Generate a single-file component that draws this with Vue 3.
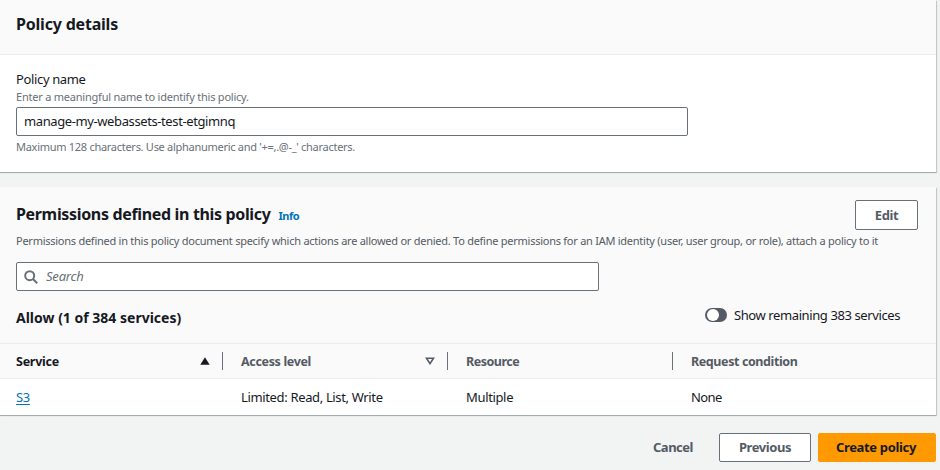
<script setup>
import { ref } from 'vue'

const policyName = ref('manage-my-webassets-test-etgimnq')
const search = ref('')
const showRemaining = ref(false)
const rows = [
  { service: 'S3', access: 'Limited: Read, List, Write', resource: 'Multiple', condition: 'None' },
]
</script>

<template>
  <main class="page">
    <section class="panel">
      <header class="panel-header">
        <h2 class="title details-title">Policy details</h2>
      </header>
      <div class="details">
        <label class="label" for="policy-name">Policy name</label>
        <p class="hint">Enter a meaningful name to identify this policy.</p>
        <input id="policy-name" v-model="policyName" class="input name-input" type="text" spellcheck="false" />
        <p class="hint constraint">Maximum 128 characters. Use alphanumeric and '+=,.@-_' characters.</p>
      </div>
    </section>

    <section class="panel permissions">
      <div class="perm-head">
        <div class="perm-top">
          <div class="heading">
            <h2 class="title perm-title">Permissions defined in this policy</h2>
            <a class="info">Info</a>
          </div>
          <button class="btn edit">Edit</button>
        </div>
        <p class="desc">Permissions defined in this policy document specify which actions are allowed or denied. To define permissions for an IAM identity (user, user group, or role), attach a policy to it</p>
        <div class="search">
          <svg class="search-icon" viewBox="0 0 14 14" width="14" height="14">
            <circle cx="5.7" cy="5.7" r="4.5" />
            <path d="M9 9l4.2 4.2" />
          </svg>
          <input v-model="search" class="search-field" type="text" placeholder="Search" />
        </div>
        <div class="allow-row">
          <h3 class="allow">Allow (1 of 384 services)</h3>
          <label class="toggle">
            <input v-model="showRemaining" type="checkbox" class="check" />
            <span class="track"><span class="knob"></span></span>
            <span class="toggle-label">Show remaining 383 services</span>
          </label>
        </div>
      </div>

      <div class="row head">
        <div class="cell sorted">
          <span class="th-service">Service</span>
          <svg viewBox="0 0 10 8" width="10" height="8"><path class="solid" d="M5 .3L9.7 7.7H.3z" /></svg>
        </div>
        <div class="cell">
          <span class="th-access">Access level</span>
          <svg viewBox="0 0 10 8" width="10" height="8"><path class="outline" d="M1.5 1.2h7L5 6.6z" /></svg>
        </div>
        <div class="cell"><span class="th-resource">Resource</span></div>
        <div class="cell"><span class="th-condition">Request condition</span></div>
      </div>
      <div v-for="r in rows" :key="r.service" class="row body">
        <div class="cell"><a class="link">{{ r.service }}</a></div>
        <div class="cell">{{ r.access }}</div>
        <div class="cell">{{ r.resource }}</div>
        <div class="cell condition">{{ r.condition }}</div>
      </div>
    </section>

    <footer class="actions">
      <button class="btn cancel">Cancel</button>
      <button class="btn previous">Previous</button>
      <button class="btn primary">Create policy</button>
    </footer>
  </main>
</template>

<style>
body {
  background: #f2f3f3;
}
</style>

<style scoped>
.page {
  box-sizing: border-box;
  height: 470px;
  padding-right: 4px;
  overflow: hidden;
  background: #f2f3f3;
  color: #16191f;
  font: 13px/18px "Noto Sans", sans-serif;
  letter-spacing: -0.35px;
}
.page * {
  box-sizing: border-box;
}
h2, h3, p {
  margin: 0;
}
input, button {
  font: inherit;
  letter-spacing: inherit;
  color: inherit;
}
.panel {
  height: 172px;
  background: #fff;
  box-shadow: 0 1px 0 #a3adb0, 1px 1px 1px rgba(0, 28, 36, 0.2);
}
.panel-header {
  height: 55px;
  padding: 14px 16px;
  background: #fafafa;
  border-bottom: 1px solid #eaeded;
}
.title {
  font-size: 16px;
  line-height: 20px;
  font-weight: 700;
}
.details-title {
  letter-spacing: -0.2px;
}
.details {
  padding: 15px 16px 0;
}
.label {
  display: block;
  letter-spacing: -0.36px;
}
.hint {
  margin-top: 1px;
  font-size: 11px;
  line-height: 16px;
  letter-spacing: -0.22px;
  color: #687078;
}
.constraint {
  margin-top: 3px;
  letter-spacing: -0.28px;
}
.input {
  display: block;
  height: 29px;
  border: 1px solid #687078;
  border-radius: 2px;
  background: #fff;
  outline: none;
}
.name-input {
  width: 672px;
  margin-top: 2px;
  padding: 0 7px 1px;
  letter-spacing: -0.396px;
}
.permissions {
  height: 228px;
  margin-top: 15px;
}
.perm-head {
  height: 156px;
  padding: 13px 16px 0;
  background: #fafafa;
}
.perm-top {
  display: flex;
  justify-content: space-between;
  height: 33px;
  padding-right: 2px;
}
.heading {
  display: flex;
  align-items: baseline;
  gap: 8px;
  padding-top: 4px;
}
.perm-title {
  letter-spacing: -0.339px;
}
.info {
  font-size: 11px;
  line-height: 16px;
  font-weight: 700;
  letter-spacing: -0.5px;
  color: #0073bb;
}
.desc {
  font-size: 11px;
  line-height: 16px;
  letter-spacing: -0.256px;
  color: #545b64;
  white-space: nowrap;
}
.search {
  display: flex;
  align-items: center;
  gap: 8px;
  width: 583px;
  height: 29px;
  margin-top: 13px;
  padding: 0 7px;
  border: 1px solid #687078;
  border-radius: 2px;
  background: #fff;
}
.search-icon {
  fill: none;
  stroke: #687078;
  stroke-width: 2;
}
.search-field {
  flex: 1;
  padding: 0 0 2px;
  border: 0;
  outline: none;
  background: none;
  letter-spacing: -0.2px;
}
.search-field::placeholder {
  color: #687078;
  font-style: italic;
  opacity: 1;
}
.allow-row {
  display: flex;
  justify-content: space-between;
  padding: 15px 20px 0 0;
}
.allow {
  margin-top: 2px;
  font-size: 14px;
  line-height: 20px;
  letter-spacing: 0;
}
.toggle {
  display: flex;
  align-items: center;
  height: 18px;
  letter-spacing: -0.4px;
}
.check {
  display: none;
}
.track {
  display: flex;
  width: 22px;
  height: 14px;
  margin-right: 7px;
  padding: 1px 2px;
  border-radius: 7px;
  background: #545b64;
}
.knob {
  width: 12px;
  height: 12px;
  border-radius: 50%;
  background: #fff;
}
.check:checked + .track {
  justify-content: flex-end;
}
.row {
  display: grid;
  grid-template-columns: 223px 225px 225px 263px;
  align-items: center;
}
.head {
  height: 36px;
  border: solid #eaeded;
  border-width: 1px 0;
  background: #fafafa;
  color: #545b64;
  font-size: 12.5px;
  font-weight: 700;
}
.head span {
  padding-top: 1px;
}
.body {
  height: 36px;
}
.cell {
  padding: 0 18px;
}
.cell:first-child {
  padding-left: 16px;
}
.head .cell {
  display: flex;
  align-items: center;
  justify-content: space-between;
  height: 18px;
  padding-right: 12px;
  border-right: 1px solid #687078;
}
.head .cell:last-child {
  border-right: 0;
}
.head .sorted {
  color: #16191f;
}
.solid {
  fill: #16191f;
}
.outline {
  fill: none;
  stroke: #545b64;
  stroke-width: 1.6;
}
.th-service {
  letter-spacing: -0.25px;
}
.th-access {
  letter-spacing: -0.34px;
}
.th-resource {
  letter-spacing: -0.5px;
}
.th-condition {
  letter-spacing: -0.4px;
}
.condition {
  letter-spacing: -0.6px;
}
.link {
  color: #0073bb;
  text-decoration: underline;
  text-underline-offset: 2px;
}
.btn {
  height: 29px;
  padding: 0 0 1px;
  border: 1px solid #687078;
  border-radius: 2px;
  background: #fff;
  color: #545b64;
  font-weight: 700;
  letter-spacing: -0.38px;
}
.edit {
  width: 63px;
  height: 30px;
}
.actions {
  display: flex;
  justify-content: flex-end;
  padding-top: 18px;
}
.cancel {
  width: 78px;
  margin-right: 7px;
  border-color: transparent;
  background: transparent;
  letter-spacing: -0.48px;
}
.previous {
  width: 92px;
  margin-right: 7px;
  letter-spacing: -0.44px;
}
.primary {
  width: 118px;
  padding-right: 2px;
  border-color: #ff9900;
  background: #ff9900;
  color: #16191f;
  letter-spacing: -0.34px;
}
</style>
